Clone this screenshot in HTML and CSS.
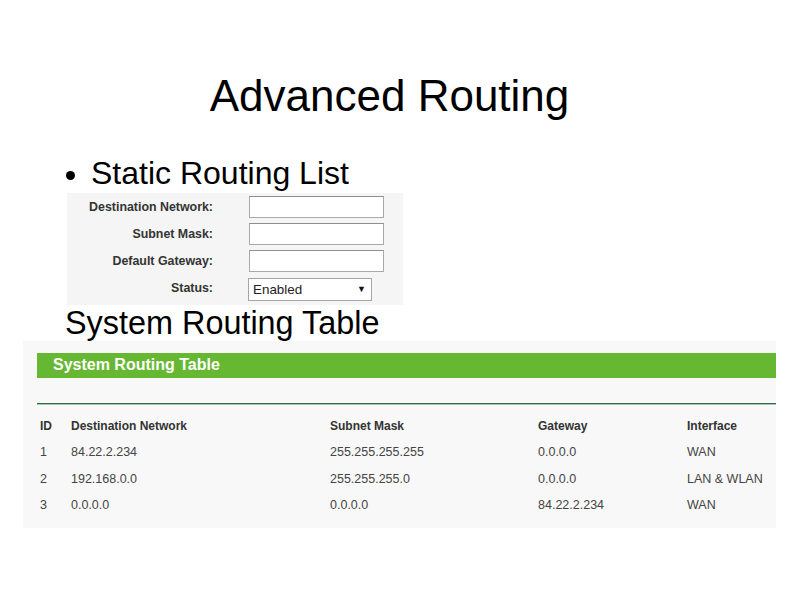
FILE: index.html
```html
<!DOCTYPE html>
<html>
<head>
<meta charset="utf-8">
<link rel="stylesheet" href="styles.css">
</head>
<body>
<div class="slide">
  <h1 class="title">Advanced Routing</h1>
  <div class="bullet-line"><span class="dot"></span><span>Static Routing List</span></div>
  <div class="form-panel">
    <div class="form-row"><label>Destination Network:</label><div class="input"></div></div>
    <div class="form-row"><label>Subnet Mask:</label><div class="input"></div></div>
    <div class="form-row"><label>Default Gateway:</label><div class="input"></div></div>
    <div class="form-row"><label>Status:</label><div class="select"><span>Enabled</span><span class="arrow">&#9660;</span></div></div>
  </div>
  <div class="subhead">System Routing Table</div>
  <div class="table-panel">
    <div class="green-bar">System Routing Table</div>
    <div class="rule"></div>
    <div class="grid">
      <div class="th">ID</div><div class="th">Destination Network</div><div class="th">Subnet Mask</div><div class="th">Gateway</div><div class="th">Interface</div>
      <div class="td">1</div><div class="td">84.22.2.234</div><div class="td">255.255.255.255</div><div class="td">0.0.0.0</div><div class="td">WAN</div>
      <div class="td">2</div><div class="td">192.168.0.0</div><div class="td">255.255.255.0</div><div class="td">0.0.0.0</div><div class="td">LAN &amp; WLAN</div>
      <div class="td">3</div><div class="td">0.0.0.0</div><div class="td">0.0.0.0</div><div class="td">84.22.2.234</div><div class="td">WAN</div>
    </div>
  </div>
</div>
</body>
</html>
```
FILE: styles.css
```css
html, body { margin: 0; padding: 0; background: #fff; }
body { font-family: "Liberation Sans", Arial, sans-serif; color: #000; }
.slide { width: 794px; height: 595px; overflow: hidden; padding-top: 71px; box-sizing: border-box; }
.title { margin: 0; font-weight: normal; font-size: 44px; line-height: 50px; text-align: center; padding-right: 15px; }
.bullet-line { margin-top: 34px; margin-bottom: 2px; display: flex; align-items: center; padding-left: 66px; font-size: 32px; line-height: 36px; gap: 16px; }
.dot { width: 9px; height: 9px; border-radius: 50%; background: #000; margin-top: 4px; }
.form-panel { margin-left: 67px; width: 336px; height: 112px; box-sizing: border-box; background: #f5f5f5; padding-top: 3px; display: flex; flex-direction: column; gap: 5px; }
.form-row { display: flex; align-items: center; height: 22px; }
.form-row label { width: 146px; text-align: right; font-weight: bold; font-size: 12.4px; color: #333; }
.input { margin-left: 36px; width: 135px; height: 22px; box-sizing: border-box; background: #fff; border: 1px solid #a9a9a9; border-top-color: #8f8f8f; }
.select { margin-left: 35px; margin-top: 2px; width: 124px; height: 23px; box-sizing: border-box; background: #fff; border: 1px solid #a6a6a6; display: flex; align-items: center; justify-content: space-between; padding: 0 5px 0 4px; font-size: 13.4px; color: #222; }
.arrow { font-size: 9px; color: #111; }
.subhead { font-size: 32.4px; line-height: 36px; padding-left: 65px; }
.table-panel { margin-left: 23px; width: 753px; height: 187px; box-sizing: border-box; background: #f8f8f8; padding: 12px 0 0 14px; }
.green-bar { height: 25px; line-height: 24px; background: #66b833; color: #fff; font-weight: bold; font-size: 16px; padding-left: 16px; }
.rule { margin-top: 25px; height: 2px; background: linear-gradient(#2f6a50 0 1px, #9ccbb0 1px 2px); }
.grid { margin-top: 7.5px; padding-left: 3px; display: grid; grid-template-columns: 31px 259px 208px 149px 1fr; grid-auto-rows: 26.5px; align-items: center; font-size: 12.5px; }
.th { font-weight: bold; font-size: 12px; color: #333; }
.td { color: #444; }
```
